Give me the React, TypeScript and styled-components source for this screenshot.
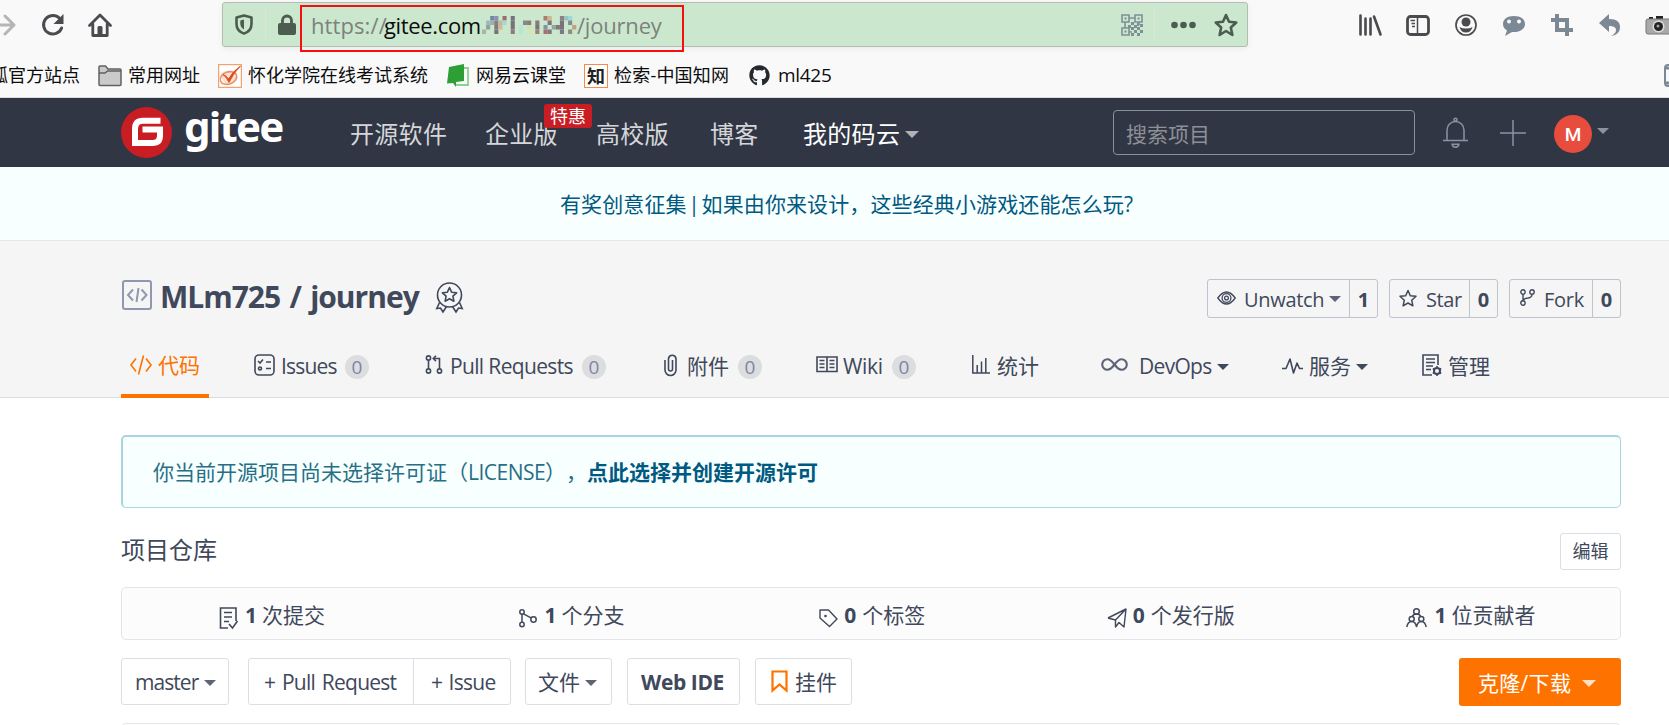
import React from "react";
import styled, { createGlobalStyle } from "styled-components";
import { FaGithub } from "react-icons/fa";

const Global = createGlobalStyle`
  *, *::before, *::after { box-sizing: border-box; }
  html, body { margin: 0; padding: 0; background: #fff; overflow: hidden; }
  body {
    font-family: "Open Sans", "Noto Sans CJK SC", sans-serif;
    font-size: 21px;
    color: #40485b;
    text-spacing-trim: space-all;
  }
`;

const Page = styled.div`
  width: 1669px;
  height: 725px;
  overflow: hidden;
  display: flex;
  flex-direction: column;
`;

interface SpaceProps {
  $ml?: number;
  $mt?: number;
}

const Svg = styled.svg<SpaceProps>`
  display: block;
  flex: none;
  margin-left: ${(p) => p.$ml ?? 0}px;
  margin-top: ${(p) => p.$mt ?? 0}px;
  overflow: visible;
`;

interface IconProps {
  w: number;
  h: number;
  ml?: number;
  mt?: number;
  color?: string;
  stroke?: number;
  children: React.ReactNode;
}

const Icon = ({ w, h, ml, mt, color = "currentColor", stroke = 1.6, children }: IconProps) => (
  <Svg
    width={w}
    height={h}
    viewBox={`0 0 ${w} ${h}`}
    $ml={ml}
    $mt={mt}
    fill="none"
    stroke={color}
    strokeWidth={stroke}
  >
    {children}
  </Svg>
);

interface LabelProps extends SpaceProps {
  $w?: number;
  $size?: number;
  $color?: string;
  $bold?: boolean;
  $track?: number;
  $word?: number;
}

const Label = styled.span<LabelProps>`
  flex: none;
  white-space: nowrap;
  line-height: 1.4;
  margin-left: ${(p) => p.$ml ?? 0}px;
  margin-top: ${(p) => p.$mt ?? 0}px;
  width: ${(p) => (p.$w ? `${p.$w}px` : "auto")};
  font-size: ${(p) => p.$size ?? 21}px;
  color: ${(p) => p.$color ?? "inherit"};
  font-weight: ${(p) => (p.$bold ? 700 : 400)};
  letter-spacing: ${(p) => p.$track ?? 0}px;
  word-spacing: ${(p) => p.$word ?? 0}px;
`;

const Caret = styled.span<{ $ml?: number; $mt?: number; $half?: number; $color?: string }>`
  flex: none;
  margin-left: ${(p) => p.$ml ?? 0}px;
  margin-top: ${(p) => p.$mt ?? 0}px;
  border-left: ${(p) => p.$half ?? 6}px solid transparent;
  border-right: ${(p) => p.$half ?? 6}px solid transparent;
  border-top: ${(p) => p.$half ?? 6}px solid ${(p) => p.$color ?? "#5d6475"};
`;

/* Browser toolbar */

const Chrome = styled.header`
  height: 98px;
  flex: none;
  background: #f9f9fa;
  border-bottom: 1px solid #dcdddf;
`;

const ToolRow = styled.div`
  height: 51px;
  display: flex;
  align-items: flex-start;
`;

const NavButtons = styled.div`
  width: 222px;
  flex: none;
  height: 50px;
  display: flex;
  align-items: center;
`;

const UrlBar = styled.div`
  width: 1026px;
  flex: none;
  height: 45px;
  margin-top: 2px;
  padding-right: 9px;
  display: flex;
  align-items: center;
  background: #cbe8ce;
  border: 1px solid #b4bdb5;
  border-radius: 3px;
  box-shadow: 0 2px 6px rgba(0, 0, 0, 0.06);
`;

const UrlSpacer = styled.span`
  flex: 1;
`;

const Divider = styled.span<{ $ml: number }>`
  flex: none;
  width: 1px;
  height: 31px;
  margin-left: ${(p) => p.$ml}px;
  background: #dde6de;
`;

const Highlight = styled.div`
  flex: none;
  width: 384px;
  height: 47px;
  margin: 8px 0 0 4px;
  display: flex;
  align-items: center;
  border: 2px solid #f50f0f;
  padding: 0 0 7px 9px;
  color: #7c827d;
`;

const Extensions = styled.div`
  height: 50px;
  flex: none;
  display: flex;
  align-items: center;
`;

const Bookmarks = styled.div`
  height: 46px;
  display: flex;
  align-items: center;
  padding-top: 3px;
  color: #0c0c0d;
`;

const GithubMark = styled(FaGithub)`
  flex: none;
`;

const CnkiIcon = styled.span`
  flex: none;
  width: 24px;
  height: 24px;
  margin-left: 17px;
  border: 1px solid #f58a4b;
  background: #fff;
  color: #222;
  font: 700 18px/20px "Noto Sans CJK SC", sans-serif;
  text-align: center;
`;

const MOSAIC: [number, number, string][] = [
  [0, 3, "#a5b8a8"], [1, 1, "#9fb8c0"], [2, 0, "#7287a5"], [3, 0, "#8695ac"], [2, 1, "#9cb1a6"], [3, 1, "#8b7d85"],
  [4, 1, "#b5bfa0"], [3, 2, "#7d7b7c"], [3, 3, "#777477"], [4, 2, "#d3b891"], [5, 0, "#a0696a"], [5, 1, "#a8d6d6"],
  [1, 2, "#8ea39c"], [7, 0, "#77727a"], [7, 1, "#77727a"], [7, 2, "#77727a"], [7, 3, "#8d7d7a"],
  [9, 2, "#b1e8da"], [9, 3, "#b1e8cf"], [10, 1, "#85898c"], [11, 1, "#867c81"], [11, 2, "#cfe6ab"], [11, 3, "#d3e6ae"],
  [13, 1, "#8d7777"], [13, 2, "#777477"], [13, 3, "#9b8176"], [15, 0, "#a87c77"], [16, 0, "#ceb889"], [16, 1, "#837478"],
  [15, 2, "#7e95a8"], [15, 3, "#a8706b"], [16, 3, "#817585"], [17, 2, "#91a69d"], [18, 2, "#7e777c"],
  [19, 0, "#89847e"], [19, 1, "#777477"], [19, 2, "#777477"], [19, 3, "#817585"], [20, 0, "#9ec2c9"], [21, 0, "#9bd9d2"],
  [21, 1, "#868b8e"], [22, 2, "#c1a17e"], [21, 3, "#8f8d84"],
];

/* Site header */

const SiteHeader = styled.nav`
  height: 69px;
  flex: none;
  display: flex;
  align-items: center;
  padding-left: 121px;
  background: #313644;
  color: #d4d6da;
`;

const Wordmark = styled.span`
  flex: none;
  width: 165px;
  margin: -13px 0 0 12px;
  font: 700 42px/48px "Noto Sans", "Open Sans", sans-serif;
  letter-spacing: -1.8px;
  color: #fff;
`;

const Enterprise = styled.span`
  position: relative;
  flex: none;
  width: 111px;
  display: flex;
`;

const PromoTag = styled.span`
  position: absolute;
  left: 59px;
  top: -10px;
  width: 48px;
  height: 24px;
  border-radius: 3px;
  background: #c71d23;
  color: #fff;
  font-size: 18px;
  line-height: 24px;
  text-align: center;
`;

const SearchBox = styled.div`
  flex: none;
  width: 302px;
  height: 45px;
  margin-left: 194px;
  padding-left: 12px;
  display: flex;
  align-items: center;
  border: 1px solid #8a8fa0;
  border-radius: 4px;
  color: #8d9096;
`;

const Avatar = styled.span`
  flex: none;
  width: 38px;
  height: 38px;
  margin: 3px 0 0 28px;
  border-radius: 50%;
  background: #e74c3c;
  color: #fff;
  font: 500 19px/39px Roboto, sans-serif;
  text-align: center;
`;

const Notice = styled.div`
  height: 74px;
  flex: none;
  display: flex;
  align-items: center;
  padding: 3px 0 0 560px;
  background: #f7ffff;
  border-bottom: 1px solid #e3e9ed;
  color: #005980;
`;

/* Repository heading */

const RepoHead = styled.section`
  height: 157px;
  flex: none;
  padding-left: 121px;
  background: #f5f5f5;
  border-bottom: 1px solid #dbdcdd;
`;

const TitleRow = styled.div`
  height: 109px;
  width: 1500px;
  display: flex;
  align-items: center;
  justify-content: space-between;
  padding-top: 5px;
`;

const Title = styled.div`
  display: flex;
  align-items: center;
  padding-bottom: 3px;
`;

const Actions = styled.div`
  display: flex;
  gap: 11px;
`;

const ActionButton = styled.div<{ $w: number }>`
  width: ${(p) => p.$w}px;
  height: 39px;
  display: flex;
  align-items: center;
  padding-left: 9px;
  border: 1px solid #bfc2cf;
  border-radius: 3px;
`;

const Count = styled.span<{ $w: number }>`
  width: ${(p) => p.$w}px;
  height: 37px;
  margin-left: auto;
  border-left: 1px solid #bfc2cf;
  font-size: 20px;
  line-height: 39px;
  font-weight: 700;
  text-align: center;
`;

const Tabs = styled.div`
  height: 48px;
  display: grid;
  grid-template-columns: 133px 171px 239px 152px 156px 129px 181px 140px 150px;
`;

const Tab = styled.div<{ $active?: boolean }>`
  height: ${(p) => (p.$active ? 48 : 44)}px;
  width: ${(p) => (p.$active ? "88px" : "auto")};
  padding: ${(p) => (p.$active ? "0 0 12px 9px" : "0 0 10px 0")};
  display: flex;
  align-items: center;
  color: ${(p) => (p.$active ? "#fe7300" : "#40485b")};
  border-bottom: ${(p) => (p.$active ? "4px solid #fe7300" : "none")};
`;

const Badge = styled.span<{ $ml: number }>`
  flex: none;
  width: 24px;
  height: 24px;
  margin: 0 0 0 ${(p) => p.$ml}px;
  border-radius: 50%;
  background: #dcdddf;
  color: #7f86a5;
  font-size: 19px;
  line-height: 24px;
  text-align: center;
`;

/* Repository body */

const Body = styled.main`
  width: 1500px;
  margin-left: 121px;
  flex: none;
`;

const Alert = styled.div`
  height: 73px;
  margin-top: 37px;
  padding-left: 30px;
  display: flex;
  align-items: center;
  background: #f7ffff;
  border: 1px solid #a9d5de;
  border-top-width: 2px;
  border-left-width: 2px;
  border-radius: 5px;
  color: #276f86;
`;

const SectionHead = styled.div`
  height: 37px;
  margin-top: 25px;
  display: flex;
  align-items: center;
  justify-content: space-between;
`;

const EditButton = styled.span`
  width: 61px;
  height: 37px;
  border: 1px solid #d9dfe4;
  border-radius: 3px;
  font-size: 18px;
  line-height: 35px;
  text-align: center;
`;

const Stats = styled.div`
  height: 53px;
  margin-top: 17px;
  display: grid;
  grid-template-columns: repeat(5, 1fr);
  background: #fcfcfc;
  border: 1px solid #e3e5e7;
  border-radius: 5px;
`;

const Stat = styled.div<{ $pad: number }>`
  display: flex;
  align-items: center;
  padding-left: ${(p) => p.$pad}px;
`;

const Toolbar = styled.div`
  margin-top: 18px;
  height: 48px;
  display: flex;
  align-items: flex-start;
`;

const Button = styled.div<{ $w: number; $ml?: number; $pad: number; $join?: "left" | "right" }>`
  width: ${(p) => p.$w}px;
  height: 47px;
  margin-left: ${(p) => p.$ml ?? 0}px;
  padding: 3px 0 0 ${(p) => p.$pad}px;
  display: flex;
  align-items: center;
  border: 1px solid #d9dfe4;
  border-radius: ${(p) => (p.$join === "left" ? "3px 0 0 3px" : p.$join === "right" ? "0 3px 3px 0" : "3px")};
`;

const CloneButton = styled.div`
  width: 162px;
  height: 48px;
  margin-left: auto;
  padding: 3px 0 0 19px;
  display: flex;
  align-items: center;
  background: #fe7300;
  border-radius: 3px;
  color: #fff;
`;

const FileTable = styled.div`
  height: 40px;
  margin-top: 17px;
  border: 1px solid #e3e5e7;
  border-radius: 5px;
`;

const DARK = "#4a4a4f";
const URLGREEN = "#4d5c50";
const STEEL = "#7c8894";

const QrIcon = () => (
  <Icon w={22} h={22} color="#7d8f97" stroke={1.6}>
    <path d="M1 1h7v7H1zM14 1h7v7h-7zM1 14h7v7H1zM8 4h6M4 8v6M18 8v3M8 18h3" />
    <path
      d="M3.5 3.5h2v2h-2zM16.5 3.5h2v2h-2zM3.5 16.5h2v2h-2zM10 8h3v3h-3zM13 11h3v3h-3zM16 9h2v3h-2zM7 11h3v3H7zM10 13h3v3h-3zM13 16h3v3h-3zM16 13h3v3h-3zM19 10h3v3h-3zM19 16h3v3h-3zM10 19h3v3h-3zM16 19h3v3h-3z"
      fill="#7d8f97"
      stroke="none"
    />
  </Icon>
);

const BrowserChrome = () => (
  <Chrome>
    <ToolRow>
      <NavButtons>
        <Icon w={16} h={22} color="#b5b5b7" stroke={3}>
          <path d="M-4 11h18M5 2l9 9-9 9" strokeLinecap="round" strokeLinejoin="round" />
        </Icon>
        <Icon w={24} h={24} ml={25} color={DARK} stroke={3}>
          <path d="M18.5 5.2A9.3 9.3 0 1 0 20.6 15" strokeLinecap="round" />
          <path d="M22.5 1v10h-10z" fill={DARK} stroke="none" />
        </Icon>
        <Icon w={24} h={24} ml={23} color={DARK} stroke={2.8}>
          <path d="M1.5 12.5L12 2l10.500 10.500M4.800 11v11.500h14.400V11" strokeLinecap="round" strokeLinejoin="round" />
          <path d="M9.500 22v-7.500q0-1.500 1.500-1.500h2q1.500 0 1.500 1.500V22z" fill={DARK} stroke="none" />
        </Icon>
      </NavButtons>
      <UrlBar>
        <Icon w={18} h={21} ml={12} color={URLGREEN} stroke={2.6}>
          <path d="M9 1.400l7.500 2v6.600c0 4.500-3 8-7.500 9.600C4.500 18 1.500 14.500 1.500 10V3.400z" strokeLinejoin="round" />
          <path d="M9 5.500v10C6.500 14 5.300 12 5.300 9.500v-3z" fill={URLGREEN} stroke="none" />
        </Icon>
        <Divider $ml={12} />
        <Icon w={18} h={21} ml={12} color={URLGREEN} stroke={2.8}>
          <path d="M4.500 10V6.500a4.500 4.500 0 0 1 9 0V10" />
          <rect x="0" y="9" width="18" height="12" rx="2" fill={URLGREEN} stroke="none" />
        </Icon>
        <Highlight>
          <Label $size={22} $w={73} $track={0.1}>https://</Label>
          <Label $size={22} $w={98} $color="#0c0c0d" $track={-0.35}>gitee.com</Label>
          <Icon w={95} h={20} stroke={0}>
            {MOSAIC.map(([x, y, c]) => (
              <rect key={`${x}-${y}`} x={x * 4.1} y={y * 4.5 + 1} width="4.100" height="4.500" fill={c} />
            ))}
          </Icon>
          <Label $size={22} $w={90} $track={-0.2}>/journey</Label>
        </Highlight>
        <UrlSpacer />
        <QrIcon />
        <Divider $ml={11} />
        <Icon w={25} h={8} ml={16} stroke={0}>
          <g fill={URLGREEN}>
            <circle cx="3.500" cy="4" r="3.300" />
            <circle cx="12.500" cy="4" r="3.300" />
            <circle cx="21.500" cy="4" r="3.300" />
          </g>
        </Icon>
        <Icon w={24} h={24} ml={18} color={URLGREEN} stroke={2.6}>
          <path
            d="M12 2l3 6.800 7.300.7-5.500 5 1.600 7.500L12 18l-6.400 4 1.600-7.500-5.500-5L9 8.800z"
            strokeLinejoin="round"
          />
        </Icon>
      </UrlBar>
      <Extensions>
        <Icon w={23} h={22} ml={111} color={DARK} stroke={2.600}>
          <path d="M1.500 1.500v19M6.500 4.500v16M11.500 4.500v16M15 2.500l6.500 18" strokeLinecap="round" />
        </Icon>
        <Icon w={24} h={21} ml={24} color={DARK} stroke={2.800}>
          <rect x="1.500" y="1.500" width="21" height="18" rx="3" />
          <path d="M11.500 1.500v18" stroke={DARK} strokeWidth="1.500" />
          <path d="M4.500 5.500h4.500M5.500 8.500h3.500M6 11.500h3" strokeWidth="1.400" />
        </Icon>
        <Icon w={22} h={22} ml={25} color={DARK} stroke={1.700}>
          <circle cx="11" cy="11" r="10" />
          <circle cx="11" cy="8" r="4.500" fill={DARK} stroke="none" />
          <path d="M4.500 13q2.500 1.500 6.500 1.500t6.500-1.500q-1.500 5.500-6.500 5.500t-6.500-5.500z" fill={DARK} stroke="none" />
        </Icon>
        <Icon w={24} h={21} ml={25} stroke={0}>
          <path d="M12 1C5 1 1 4.500 1 9c0 3 1.500 5 4 6.500L3 21l7-4c8 .5 13-3 13-8s-4-8-11-8z" fill={STEEL} />
          <circle cx="7" cy="6.500" r="2" fill="#f9f9fa" />
          <circle cx="17" cy="6.500" r="2" fill="#f9f9fa" />
        </Icon>
        <Icon w={22} h={22} ml={25} color={STEEL} stroke={4}>
          <path d="M6 0v16h16M0 6h16v16" />
        </Icon>
        <Icon w={22} h={22} ml={26} stroke={0}>
          <path d="M0 9L10 0v5c8 0 11 3 11 8s-3 8-9 9c4-2 5-4 5-6 0-3-3-4-7-4v6z" fill={STEEL} />
        </Icon>
        <Icon w={26} h={19} ml={25} stroke={0}>
          <path d="M3 1h4v3H3zM10 0h7v3h-7z" fill="#222" />
          <rect x="0" y="3" width="32" height="15" rx="2" fill="#a9a9a9" stroke="#777" strokeWidth="1" />
          <circle cx="12.500" cy="10.500" r="6" fill="#ddd" />
          <circle cx="12.500" cy="10.500" r="4.500" fill="#222" />
          <circle cx="12" cy="10" r="1.500" fill="#8fa5bb" />
        </Icon>
      </Extensions>
    </ToolRow>
    <Bookmarks>
      <Label $size={18} $w={90} $ml={-10}>狐官方站点</Label>
      <Icon w={24} h={21} ml={18} color="#616164" stroke={1.500}>
        <path d="M1 19.500V2q0-1 1-1h5.500l2.500 3H22q1 0 1 1v14.500q0 1-1 1H2q-1 0-1-1z" fill="#cacacb" />
        <path d="M1 8h6l2.500-2H23" />
      </Icon>
      <Label $size={18} $w={72} $ml={6}>常用网址</Label>
      <Icon w={24} h={24} ml={18} stroke={1.200}>
        <rect x="0.600" y="0.600" width="22.800" height="22.800" fill="#fff" stroke="#f0a271" />
        <path d="M3 9q8-5 16 0-1 10-9 12Q4 19 3 9z" fill="#fbe0cf" stroke="none" />
        <ellipse cx="10.500" cy="14" rx="8.500" ry="6" stroke="#e79468" strokeWidth="1.600" transform="rotate(-20 10.500 14)" />
        <path d="M5 10.500q3.500 1 5.500 4.500Q15 7 22.500 2 15.500 9 11 18.500 8.500 13 5 10.500z" fill="#d9481c" stroke="#d9481c" strokeWidth="0.800" />
      </Icon>
      <Label $size={18} $w={180} $ml={6}>怀化学院在线考试系统</Label>
      <Icon w={22} h={23} ml={19} stroke={0}>
        <path d="M14 4h7v17H8" stroke="#8fcf90" strokeWidth="1.800" />
        <path d="M2 3l15-3v17l-8 1v5l-3-4-6 .5z" fill="#2e9f34" />
      </Icon>
      <Label $size={18} $w={91} $ml={7}>网易云课堂</Label>
      <CnkiIcon>知</CnkiIcon>
      <Label $size={18} $w={135} $ml={6} $track={0.2}>检索-中国知网</Label>
      <GithubMark size={21} color="#24292e" />
      <Label $size={19} $w={60} $ml={8} $track={-0.3}>ml425</Label>
      <Icon w={12} h={24} ml={826} color={STEEL} stroke={2}>
        <rect x="1" y="1" width="16" height="21" rx="3" />
        <path d="M1 4h12M1 19h12" strokeWidth="3" />
      </Icon>
    </Bookmarks>
  </Chrome>
);

const GiteeHeader = () => (
  <SiteHeader>
    <Icon w={51} h={51} stroke={0}>
      <circle cx="25.500" cy="25.500" r="25.500" fill="#c71d23" />
      <path
        d="M39.500 14.300H22Q14 14.300 14 22.500V36.500H31.500Q39 36.500 39 29V23H21.500"
        stroke="#fff"
        strokeWidth="6"
        transform="translate(0 -0.500)"
      />
    </Icon>
    <Wordmark>gitee</Wordmark>
    <Label $size={24} $w={135} $mt={3} $ml={1} $track={0.3}>开源软件</Label>
    <Enterprise>
      <Label $size={24} $mt={3} $track={0.3}>企业版</Label>
      <PromoTag>特惠</PromoTag>
    </Enterprise>
    <Label $size={24} $w={114} $mt={3} $track={0.3}>高校版</Label>
    <Label $size={24} $w={93} $mt={3} $track={0.3}>博客</Label>
    <Label $size={24} $w={97} $mt={3} $track={0.3} $color="#fff">我的码云</Label>
    <Caret $ml={5} $mt={3} $half={7} $color="#aeb1b8" />
    <SearchBox>
      <Label $mt={4}>搜索项目</Label>
    </SearchBox>
    <Icon w={25} h={30} ml={28} color="#8c92a4" stroke={1.500}>
      <path d="M4 22V12a8.500 8.500 0 0 1 17 0v10M0 22.500h25M9 26.200h7q-.5 3-3.500 3T9 26.200z" />
      <circle cx="12.500" cy="1.800" r="1.500" />
    </Icon>
    <Icon w={26} h={26} ml={32} color="#8c92a4" stroke={1.500}>
      <path d="M13 0v26M0 13h26" />
    </Icon>
    <Avatar>M</Avatar>
    <Caret $ml={5} $half={6} $color="#8c92a4" $mt={-3} />
  </SiteHeader>
);

const RepoHeading = () => (
  <RepoHead>
    <TitleRow>
      <Title>
        <Icon w={30} h={30} ml={1} mt={-3} color="#8f98ae" stroke={2}>
          <rect x="1" y="1" width="28" height="28" rx="2" />
          <path d="M11 9.500L6 15l5 5.500M19.500 9.500l5 5.500-5 5.500M16.500 8l-2 14" />
        </Icon>
        <Label $size={30} $bold $w={276} $ml={8} $track={-1} $word={2.5}>MLm725 / journey</Label>
        <Icon w={27} h={31} mt={2} color="#40485b" stroke={1.600}>
          <circle cx="13.500" cy="13" r="12" />
          <path d="M13.500 5.500l2.100 4.700 5 .6-3.700 3.400 1 5-4.400-2.500-4.400 2.500 1-5-3.700-3.400 5-.6z" strokeLinejoin="round" />
          <path d="M3.500 20.500L.8 26.500l3.700-.5 2.500 4 3.500-5.500M23.500 20.500l2.700 6-3.700-.5-2.500 4-3.500-5.500" />
        </Icon>
      </Title>
      <Actions>
        <ActionButton $w={171}>
          <Icon w={19} h={14} stroke={1.300}>
            <path d="M.8 7Q9.500-5 18.200 7 9.500 19 .8 7z" />
            <circle cx="9.500" cy="7" r="4.400" />
            <circle cx="9.500" cy="7" r="1.900" />
          </Icon>
          <Label $size={20} $w={82} $ml={8} $mt={4} $track={-0.300}>Unwatch</Label>
          <Caret $ml={3} $mt={1} $half={6} />
          <Count $w={28}>1</Count>
        </ActionButton>
        <ActionButton $w={109}>
          <Icon w={18} h={18} stroke={1.500}>
            <path d="M9 1.500l2.300 5.200 5.700.6-4.300 3.900 1.200 5.600L9 14l-4.900 2.800 1.200-5.600L1 7.300l5.700-.6z" strokeLinejoin="round" />
          </Icon>
          <Label $size={20} $ml={9} $mt={4} $track={-0.400}>Star</Label>
          <Count $w={28}>0</Count>
        </ActionButton>
        <ActionButton $w={112}>
          <Icon w={15} h={17} ml={1} mt={-2} stroke={1.400}>
            <circle cx="3" cy="3" r="2.200" />
            <circle cx="12" cy="3" r="2.200" />
            <circle cx="3" cy="14" r="2.200" />
            <path d="M3 5.500v6M12 5.500q0 3-4 3.500-4 .3-4.800 2.500" />
          </Icon>
          <Label $size={20} $ml={9} $mt={4} $track={-0.300}>Fork</Label>
          <Count $w={28}>0</Count>
        </ActionButton>
      </Actions>
    </TitleRow>
    <Tabs>
      <Tab $active>
        <Icon w={22} h={20} mt={-3} stroke={1.600}>
          <path d="M6 3.500L1 10l5 6.500M16 3.500l5 6.500-5 6.500M13.500.5l-5 19" />
        </Icon>
        <Label $ml={6} $track={0.1}>代码</Label>
      </Tab>
      <Tab>
        <Icon w={21} h={22} mt={-4} stroke={1.600}>
          <rect x="1" y="1" width="19" height="20" rx="4" />
          <path d="M4 7l2 2 3-3.500M12 8h5M12 14.500h5" />
          <circle cx="6" cy="14.500" r="1.500" />
        </Icon>
        <Label $w={54} $ml={6} $track={-0.800}>Issues</Label>
        <Badge $ml={10}>0</Badge>
      </Tab>
      <Tab>
        <Icon w={18} h={19} mt={-5} stroke={1.600}>
          <circle cx="3.500" cy="3" r="2.100" />
          <circle cx="3.500" cy="16" r="2.100" />
          <circle cx="14.500" cy="16" r="2.100" />
          <path d="M3.500 5.500V14M14.500 14V3.500H8.500M11 .8L8.300 3.500 11 6.200" />
        </Icon>
        <Label $w={123} $ml={7} $track={-0.650}>Pull Requests</Label>
        <Badge $ml={9}>0</Badge>
      </Tab>
      <Tab>
        <Icon w={13} h={22} mt={-5} stroke={1.600}>
          <path d="M1 6v10a5.500 5.500 0 0 0 11 0V4.500a3.800 3.800 0 0 0-7.500 0V15a2 2 0 0 0 4 0V6" />
        </Icon>
        <Label $w={42} $ml={10}>附件</Label>
        <Badge $ml={9}>0</Badge>
      </Tab>
      <Tab>
        <Icon w={22} h={17} mt={-5} stroke={1.600}>
          <path d="M1 1h20v14.500H1zM11 1v14.500M3.500 4.500h5M3.500 8h5M3.500 11.500h5M13.500 4.500h5M13.500 8h5M13.500 11.500h5" />
        </Icon>
        <Label $w={41} $ml={5} $track={-0.300}>Wiki</Label>
        <Badge $ml={8}>0</Badge>
      </Tab>
      <Tab>
        <Icon w={18} h={19} mt={-5} stroke={1.500}>
          <path d="M.8 0v18H18M5.200 18V10M9.500 18V6.500M13.800 18V3" />
        </Icon>
        <Label $ml={7}>统计</Label>
      </Tab>
      <Tab>
        <Icon w={27} h={13} mt={-5} stroke={2.100} color="#5d6475">
          <path d="M13.500 6.500C10.500 2.500 9 1.200 6.500 1.200a5.300 5.300 0 0 0 0 10.600c2.500 0 4-1.300 7-5.300s4.500-5.300 7-5.300a5.300 5.300 0 0 1 0 10.600c-2.500 0-4-1.300-7-5.300z" />
        </Icon>
        <Label $w={73} $ml={11} $track={-0.700}>DevOps</Label>
        <Caret $ml={5} $half={6} $color="#40485b" />
      </Tab>
      <Tab>
        <Icon w={21} h={16} mt={-3} stroke={1.600}>
          <path d="M0 10.500h4L8 1l3.500 14L15 5l2.500 5.500H21" strokeLinejoin="round" />
        </Icon>
        <Label $ml={6}>服务</Label>
        <Caret $ml={5} $half={6} $color="#40485b" />
      </Tab>
      <Tab>
        <Icon w={20} h={22} mt={-4} stroke={1.600}>
          <path d="M10 21H1V1h15v10M4 5h9M4 8.500h9M4 12h7M4 15.500h5" />
          <circle cx="15" cy="17" r="3" strokeWidth="2" />
          <path d="M15 12v2M15 20v2M10.800 14.500l1.700 1M17.500 18.500l1.700 1M10.800 19.500l1.700-1M17.500 15.500l1.700-1" />
        </Icon>
        <Label $ml={6}>管理</Label>
      </Tab>
    </Tabs>
  </RepoHead>
);

const RepoBody = () => (
  <Body>
    <Alert>
      <Label $w={315} $mt={1}>你当前开源项目尚未选择许可证（</Label>
      <Label $w={77} $mt={1} $track={-0.500}>LICENSE</Label>
      <Label $w={42} $mt={1}>），</Label>
      <Label $bold $color="#005980" $mt={1}>点此选择并创建开源许可</Label>
    </Alert>
    <SectionHead>
      <Label $size={24} $mt={-4}>项目仓库</Label>
      <EditButton>编辑</EditButton>
    </SectionHead>
    <Stats>
      <Stat $pad={97}>
        <Icon w={19} h={22} mt={8} stroke={1.600}>
          <path d="M9 21H1.500V1H17v13M5 5.500h8M5 10h8M5 14.500h5M10 17l3.500 4 5-7" />
        </Icon>
        <Label $bold $ml={7} $w={17} $mt={4}>1</Label>
        <Label $mt={4}>次提交</Label>
      </Stat>
      <Stat $pad={96}>
        <Icon w={19} h={19} mt={9} stroke={1.500}>
          <circle cx="4" cy="3" r="2.200" />
          <circle cx="4" cy="15.500" r="2.200" />
          <circle cx="15.500" cy="10.500" r="2.700" />
          <path d="M4 5.300v8M5.500 4.800l7.500 4" />
        </Icon>
        <Label $bold $ml={8} $w={17} $mt={4}>1</Label>
        <Label $mt={4}>个分支</Label>
      </Stat>
      <Stat $pad={98}>
        <Icon w={19} h={19} mt={9} stroke={1.400}>
          <path d="M1 1h8.500L18 10l-7.500 7.500L1 9z" strokeLinejoin="round" />
          <circle cx="6.500" cy="7" r="1.300" fill="#40485b" stroke="none" />
        </Icon>
        <Label $bold $ml={6} $w={18} $mt={4}>0</Label>
        <Label $mt={4}>个标签</Label>
      </Stat>
      <Stat $pad={86}>
        <Icon w={20} h={20} mt={9} stroke={1.400}>
          <path d="M1 10L19 1l-2 18-5-4.500L8.500 19V12L19 1M8.500 12L1 10" strokeLinejoin="round" />
        </Icon>
        <Label $bold $ml={6} $w={18} $mt={4}>0</Label>
        <Label $mt={4}>个发行版</Label>
      </Stat>
      <Stat $pad={86}>
        <Icon w={21} h={20} mt={8} stroke={1.500}>
          <circle cx="10.500" cy="3.500" r="2.800" />
          <circle cx="5.700" cy="11" r="2.500" />
          <circle cx="15.300" cy="11" r="2.500" />
          <path d="M6.300 8.500q1-2.500 4.200-2.500t4.200 2.500M.8 19q1-5.500 4.900-5.500t4.800 5.500q1-5.500 4.800-5.500t4.900 5.500" />
        </Icon>
        <Label $bold $ml={7} $w={17} $mt={4}>1</Label>
        <Label $mt={4}>位贡献者</Label>
      </Stat>
    </Stats>
    <Toolbar>
      <Button $w={108} $pad={13}>
        <Label $w={66} $track={-0.950}>master</Label>
        <Caret $ml={3} $half={6} />
      </Button>
      <Button $w={166} $ml={19} $pad={15} $join="left">
        <Label $track={-0.750} $word={2}>+ Pull Request</Label>
      </Button>
      <Button $w={98} $ml={-1} $pad={17} $join="right">
        <Label $track={-0.700} $word={1.5}>+ Issue</Label>
      </Button>
      <Button $w={87} $ml={14} $pad={12}>
        <Label>文件</Label>
        <Caret $ml={5} $half={6} />
      </Button>
      <Button $w={113} $ml={15} $pad={13}>
        <Label $bold $track={-0.400}>Web IDE</Label>
      </Button>
      <Button $w={97} $ml={15} $pad={15}>
        <Icon w={17} h={22} mt={-5} color="#fe7300" stroke={2.200}>
          <path d="M1.500 1.500h14v19l-7-6-7 6z" />
        </Icon>
        <Label $ml={7}>挂件</Label>
      </Button>
      <CloneButton>
        <Label $w={93} $track={0.3}>克隆/下载</Label>
        <Caret $ml={11} $half={7} $color="#ffe0c8" />
      </CloneButton>
    </Toolbar>
    <FileTable />
  </Body>
);

export default function App() {
  return (
    <>
      <Global />
      <Page>
        <BrowserChrome />
        <GiteeHeader />
        <Notice>
          <Label $track={0.12} $word={-4}>有奖创意征集 | 如果由你来设计，这些经典小游戏还能怎么玩?</Label>
        </Notice>
        <RepoHeading />
        <RepoBody />
      </Page>
    </>
  );
}
